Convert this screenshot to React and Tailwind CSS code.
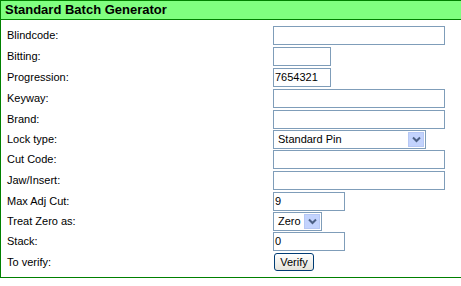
import React from "react";

function Arrow() {
  return (
    <div className="absolute right-[1px] top-[1px] bottom-[1px] w-[16px] bg-[#c3d3fd] border border-[#b7c8f4] flex items-center justify-center">
      <svg width="9" height="7" viewBox="0 0 9 7">
        <path d="M1 1.5 L4.5 5 L8 1.5" fill="none" stroke="#4d6185" strokeWidth="2" />
      </svg>
    </div>
  );
}

function TextBox({ w, value = "" }) {
  return (
    <div className={`${w} h-[19px] border border-[#7f9db9] bg-white pl-[1px] leading-[17px] text-[11px] text-black`}>
      {value}
    </div>
  );
}

function Select({ w, value }) {
  return (
    <div className={`${w} relative h-[19px] border border-[#7f9db9] bg-white pl-[4px] leading-[17px] text-[11px] text-black`}>
      {value}
      <Arrow />
    </div>
  );
}

function Row({ label, h, children }) {
  return (
    <div className={`flex items-start ${h}`}>
      <div className="w-[272px] pl-[6px] h-[19px] leading-[19px]">{label}</div>
      {children}
    </div>
  );
}

export default function App() {
  return (
    <div className="w-[461px] h-[286px] overflow-hidden bg-white text-[11px] text-black font-['Liberation_Sans',Arial,sans-serif]">
      <div className="w-[480px] border-l border-b border-[#008000]">
        <div className="h-[20px] bg-[#80ff80] border-t border-b border-[#008000] pl-[4px] font-bold text-[13px] leading-[18px]">
          Standard Batch Generator
        </div>
        <div className="pt-[6px] pb-[3px]">
          <Row label="Blindcode:" h="h-[21px]"><TextBox w="w-[172px]" /></Row>
          <Row label="Bitting:" h="h-[21px]"><TextBox w="w-[58px]" /></Row>
          <Row label="Progression:" h="h-[21px]"><TextBox w="w-[58px]" value="7654321" /></Row>
          <Row label="Keyway:" h="h-[21px]"><TextBox w="w-[172px]" /></Row>
          <Row label="Brand:" h="h-[20px]"><TextBox w="w-[172px]" /></Row>
          <Row label="Lock type:" h="h-[20px]"><Select w="w-[153px]" value="Standard Pin" /></Row>
          <Row label="Cut Code:" h="h-[21px]"><TextBox w="w-[172px]" /></Row>
          <Row label="Jaw/Insert:" h="h-[21px]"><TextBox w="w-[172px]" /></Row>
          <Row label="Max Adj Cut:" h="h-[20px]"><TextBox w="w-[72px]" value="9" /></Row>
          <Row label="Treat Zero as:" h="h-[20px]"><Select w="w-[49px]" value="Zero" /></Row>
          <Row label="Stack:" h="h-[21px]"><TextBox w="w-[72px]" value="0" /></Row>
          <Row label="To verify:" h="h-[21px]">
            <div className="ml-[1px] w-[40px] h-[18px] rounded-[3px] border border-[#003c74] bg-gradient-to-b from-white to-[#e6e4dc] text-center leading-[16px] text-[11px]">
              Verify
            </div>
          </Row>
        </div>
      </div>
    </div>
  );
}
